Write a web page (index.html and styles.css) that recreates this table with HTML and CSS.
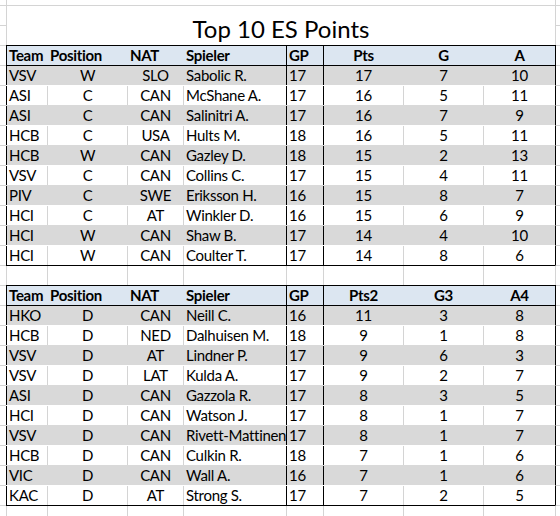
FILE: index.html
```html
<!DOCTYPE html>
<html lang="de">
<head>
<meta charset="utf-8">
<title>Top 10 ES Points</title>
<link rel="stylesheet" href="styles.css">
</head>
<body>
<div class="sheet">
  <div class="title">Top 10 ES Points</div>

  <div class="row hdr"><div class="c">Team</div><div class="c">Position</div><div class="c">NAT</div><div class="c">Spieler</div><div class="c">GP</div><div class="c ctr">Pts</div><div class="c ctr">G</div><div class="c ctr">A</div></div>
  <div class="row alt first"><div class="c">VSV</div><div class="c ctr">W</div><div class="c ctr">SLO</div><div class="c">Sabolic R.</div><div class="c">17</div><div class="c ctr">17</div><div class="c ctr">7</div><div class="c ctr">10</div></div>
  <div class="row wht"><div class="c">ASI</div><div class="c ctr">C</div><div class="c ctr">CAN</div><div class="c">McShane A.</div><div class="c">17</div><div class="c ctr">16</div><div class="c ctr">5</div><div class="c ctr">11</div></div>
  <div class="row alt"><div class="c">ASI</div><div class="c ctr">C</div><div class="c ctr">CAN</div><div class="c">Salinitri A.</div><div class="c">17</div><div class="c ctr">16</div><div class="c ctr">7</div><div class="c ctr">9</div></div>
  <div class="row wht"><div class="c">HCB</div><div class="c ctr">C</div><div class="c ctr">USA</div><div class="c">Hults M.</div><div class="c">18</div><div class="c ctr">16</div><div class="c ctr">5</div><div class="c ctr">11</div></div>
  <div class="row alt"><div class="c">HCB</div><div class="c ctr">W</div><div class="c ctr">CAN</div><div class="c">Gazley D.</div><div class="c">18</div><div class="c ctr">15</div><div class="c ctr">2</div><div class="c ctr">13</div></div>
  <div class="row wht"><div class="c">VSV</div><div class="c ctr">C</div><div class="c ctr">CAN</div><div class="c">Collins C.</div><div class="c">17</div><div class="c ctr">15</div><div class="c ctr">4</div><div class="c ctr">11</div></div>
  <div class="row alt"><div class="c">PIV</div><div class="c ctr">C</div><div class="c ctr">SWE</div><div class="c">Eriksson H.</div><div class="c">16</div><div class="c ctr">15</div><div class="c ctr">8</div><div class="c ctr">7</div></div>
  <div class="row wht"><div class="c">HCI</div><div class="c ctr">C</div><div class="c ctr">AT</div><div class="c">Winkler D.</div><div class="c">16</div><div class="c ctr">15</div><div class="c ctr">6</div><div class="c ctr">9</div></div>
  <div class="row alt"><div class="c">HCI</div><div class="c ctr">W</div><div class="c ctr">CAN</div><div class="c">Shaw B.</div><div class="c">17</div><div class="c ctr">14</div><div class="c ctr">4</div><div class="c ctr">10</div></div>
  <div class="row wht"><div class="c">HCI</div><div class="c ctr">W</div><div class="c ctr">CAN</div><div class="c">Coulter T.</div><div class="c">17</div><div class="c ctr">14</div><div class="c ctr">8</div><div class="c ctr">6</div></div>

  <div class="row blank"><div class="c"></div><div class="c"></div><div class="c"></div><div class="c"></div><div class="c"></div><div class="c"></div><div class="c"></div><div class="c"></div></div>

  <div class="row hdr"><div class="c">Team</div><div class="c">Position</div><div class="c">NAT</div><div class="c">Spieler</div><div class="c">GP</div><div class="c ctr">Pts2</div><div class="c ctr">G3</div><div class="c ctr">A4</div></div>
  <div class="row alt first"><div class="c">HKO</div><div class="c ctr">D</div><div class="c ctr">CAN</div><div class="c">Neill C.</div><div class="c">16</div><div class="c ctr">11</div><div class="c ctr">3</div><div class="c ctr">8</div></div>
  <div class="row wht"><div class="c">HCB</div><div class="c ctr">D</div><div class="c ctr">NED</div><div class="c">Dalhuisen M.</div><div class="c">18</div><div class="c ctr">9</div><div class="c ctr">1</div><div class="c ctr">8</div></div>
  <div class="row alt"><div class="c">VSV</div><div class="c ctr">D</div><div class="c ctr">AT</div><div class="c">Lindner P.</div><div class="c">17</div><div class="c ctr">9</div><div class="c ctr">6</div><div class="c ctr">3</div></div>
  <div class="row wht"><div class="c">VSV</div><div class="c ctr">D</div><div class="c ctr">LAT</div><div class="c">Kulda A.</div><div class="c">17</div><div class="c ctr">9</div><div class="c ctr">2</div><div class="c ctr">7</div></div>
  <div class="row alt"><div class="c">ASI</div><div class="c ctr">D</div><div class="c ctr">CAN</div><div class="c">Gazzola R.</div><div class="c">17</div><div class="c ctr">8</div><div class="c ctr">3</div><div class="c ctr">5</div></div>
  <div class="row wht"><div class="c">HCI</div><div class="c ctr">D</div><div class="c ctr">CAN</div><div class="c">Watson J.</div><div class="c">17</div><div class="c ctr">8</div><div class="c ctr">1</div><div class="c ctr">7</div></div>
  <div class="row alt"><div class="c">VSV</div><div class="c ctr">D</div><div class="c ctr">CAN</div><div class="c">Rivett-Mattinen</div><div class="c">17</div><div class="c ctr">8</div><div class="c ctr">1</div><div class="c ctr">7</div></div>
  <div class="row wht"><div class="c">HCB</div><div class="c ctr">D</div><div class="c ctr">CAN</div><div class="c">Culkin R.</div><div class="c">18</div><div class="c ctr">7</div><div class="c ctr">1</div><div class="c ctr">6</div></div>
  <div class="row alt"><div class="c">VIC</div><div class="c ctr">D</div><div class="c ctr">CAN</div><div class="c">Wall A.</div><div class="c">16</div><div class="c ctr">7</div><div class="c ctr">1</div><div class="c ctr">6</div></div>
  <div class="row wht"><div class="c">KAC</div><div class="c ctr">D</div><div class="c ctr">AT</div><div class="c">Strong S.</div><div class="c">17</div><div class="c ctr">7</div><div class="c ctr">2</div><div class="c ctr">5</div></div>

  <div class="row blank"><div class="c"></div><div class="c"></div><div class="c"></div><div class="c"></div><div class="c"></div><div class="c"></div><div class="c"></div><div class="c"></div></div>
</div>
</body>
</html>
```

FILE: styles.css
```css
body {
  margin: 0;
}

.sheet {
  width: 560px;
  height: 516px;
  overflow: hidden;
  box-sizing: border-box;
  padding-top: 5px;
  font-family: Lato, "Open Sans", sans-serif;
  font-size: 15px;
  color: #000;
  background-color: #fff;
  background-image:
    linear-gradient(to right, transparent 6px, #d4d4d4 6px 7px, transparent 7px 555px, #d4d4d4 555px 556px, transparent 556px),
    linear-gradient(#d4d4d4 1px, transparent 1px);
  background-size: 100% 100%, 100% 20px;
  background-position: 0 0, 0 5px;
  background-repeat: no-repeat, repeat;
}

.title {
  margin: 1px 0 0 7px;
  width: 548px;
  height: 39px;
  box-sizing: border-box;
  padding-bottom: 2px;
  background: #fff;
  display: flex;
  justify-content: center;
  align-items: flex-end;
  font-size: 24px;
  line-height: 28px;
}

.row {
  display: grid;
  grid-template-columns: 41px 80px 56px 103px 37px 80px 80px 72px;
  width: 550px;
  height: 20px;
  margin-left: 6px;
  box-sizing: border-box;
  border-top: 1px solid transparent;
  border-right: 1px solid #000;
}

.c {
  box-sizing: border-box;
  border-left: 1px solid transparent;
  padding: 0 2px;
  line-height: 19px;
  letter-spacing: -0.3px;
  white-space: nowrap;
  overflow: hidden;
}

.ctr {
  text-align: center;
}

.hdr {
  background: #dce6f1;
  border-top-color: #000;
  font-weight: bold;
}

.alt {
  background: #d9d9d9;
}

.wht {
  background: #fff;
}

.first {
  border-top-color: #000;
}

.wht .c {
  border-left-color: #d4d4d4;
}

.row .c:nth-child(1),
.row .c:nth-child(5),
.row .c:nth-child(6) {
  border-left-color: #000;
}

.blank {
  background: #fff;
  border-top-color: #000;
  border-right-color: #d4d4d4;
}

.blank .c:nth-child(n) {
  border-left-color: #d4d4d4;
}
```
